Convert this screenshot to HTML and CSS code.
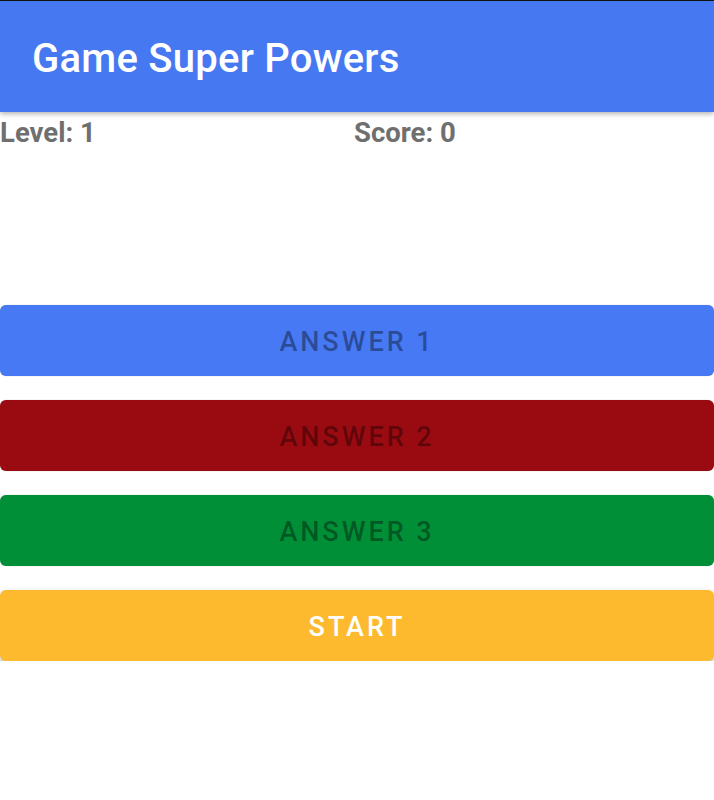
FILE: index.html
```html
<!DOCTYPE html>
<html>
<head>
<meta charset="utf-8">
<link rel="stylesheet" href="styles.css">
</head>
<body>
<div class="app">
  <header class="appbar"><h1 class="title">Game Super Powers</h1></header>
  <div class="stats">
    <span class="stat">Level: 1</span>
    <span class="stat">Score: 0</span>
  </div>
  <div class="buttons">
    <button class="btn btn-blue">ANSWER 1</button>
    <button class="btn btn-red">ANSWER 2</button>
    <button class="btn btn-green">ANSWER 3</button>
    <button class="btn btn-start">START</button>
  </div>
</div>
</body>
</html>
```
FILE: styles.css
```css
html, body {
  margin: 0;
  padding: 0;
  background: #ffffff;
  font-family: Roboto, "Noto Sans", sans-serif;
}
.app {
  border-top: 1px solid #111;
}
.appbar {
  background: #4678f2;
  height: 111px;
  display: flex;
  align-items: center;
  padding-left: 32px;
  box-shadow: 0 2px 5px rgba(0,0,0,0.3);
  position: relative;
  z-index: 1;
}
.title {
  margin: 0;
  color: #fff;
  font-size: 40px;
  font-weight: 500;
  letter-spacing: 0.25px;
  padding-top: 4px;
}
.stats {
  display: grid;
  grid-template-columns: 354px 1fr;
  color: #6f6f6f;
  font-weight: 700;
  font-size: 27.5px;
  line-height: 42px;
}
.buttons {
  display: flex;
  flex-direction: column;
  gap: 24px;
  margin-top: 151px;
}
.btn {
  height: 71px;
  border: none;
  border-radius: 6px;
  font-family: Roboto, "Noto Sans", sans-serif;
  font-weight: 500;
  font-size: 27px;
  letter-spacing: 0.11em;
  padding: 3px 0 0;
  color: rgba(0,0,0,0.38);
  box-shadow: 0 0 1px rgba(0,0,0,0.35);
}
.btn-blue { background: #4679f3; }
.btn-red { background: #990b11; }
.btn-green { background: #008f37; }
.btn-start {
  background: #fdba2e;
  color: #fff;
  box-shadow: 0 3px 6px rgba(0,0,0,0.3);
}
```
